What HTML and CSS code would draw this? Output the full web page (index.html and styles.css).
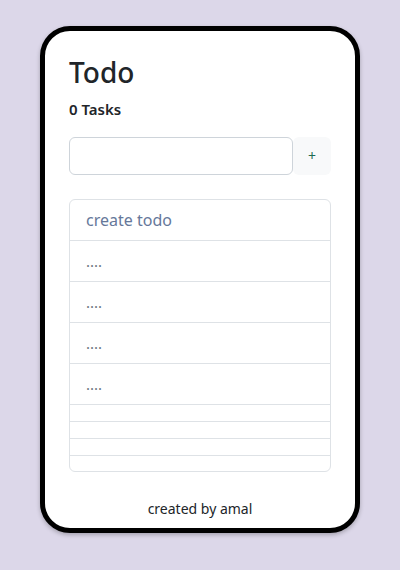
FILE: index.html
```html
<!DOCTYPE html>
<html lang="en">
<head>
<meta charset="utf-8">
<title>Todo</title>
<link rel="stylesheet" href="styles.css">
</head>
<body>
<div class="card">
  <h1 class="title">Todo</h1>
  <h6 class="count">0 Tasks</h6>
  <div class="add-row">
    <input class="add-input" type="text">
    <button class="add-btn">+</button>
  </div>
  <ul class="list">
    <li class="item item-head">create todo</li>
    <li class="item">....</li>
    <li class="item">....</li>
    <li class="item">....</li>
    <li class="item">....</li>
    <li class="item item-empty"></li>
    <li class="item item-empty"></li>
    <li class="item item-empty"></li>
    <li class="item item-empty"></li>
  </ul>
  <p class="footer">created by amal</p>
</div>
</body>
</html>
```
FILE: styles.css
```css
* { box-sizing: border-box; }
html, body { margin: 0; padding: 0; }
body {
  background: #dcd7e9;
  font-family: "Noto Sans", "Open Sans", sans-serif;
  color: #212529;
  height: 570px;
  overflow: hidden;
}
.card {
  width: 320px;
  margin: 26px auto 0;
  background: #fff;
  border: 5px solid #000;
  border-radius: 30px;
  padding: 25px 24px 0;
  box-shadow: 0 2px 4px rgba(0,0,0,0.25);
}
.title {
  margin: 0;
  font-size: 28px;
  font-weight: 500;
  line-height: 1.2;
}
.count {
  margin: 10px 0 0;
  font-size: 15px;
  font-weight: 600;
  line-height: 1.2;
}
.add-row {
  display: flex;
  margin-top: 19px;
  height: 38px;
}
.add-input {
  flex: 1;
  min-width: 0;
  border: 1px solid #ced4da;
  border-radius: 6px;
  background: #fff;
  font: inherit;
}
.add-btn {
  width: 38px;
  border: none;
  background: #f8f9fa;
  border-radius: 6px;
  color: #1e6b52;
  font-family: inherit;
  font-size: 14px;
}
.list {
  list-style: none;
  margin: 24px 0 0;
  padding: 0;
  border: 1px solid #dee2e6;
  border-radius: 6px;
}
.item {
  padding: 8px 16px;
  font-size: 15px;
  line-height: 24px;
  color: #6c757d;
  border-top: 1px solid #dee2e6;
}
.item:first-child { border-top: none; }
.item-head {
  font-size: 16px;
  color: #66789a;
}
.item-empty { height: 17px; padding: 0; }
.item-empty:last-child { height: 16px; }
.footer {
  margin: 0;
  padding: 27px 0 9px;
  text-align: center;
  font-size: 14px;
  line-height: 20px;
}
```
